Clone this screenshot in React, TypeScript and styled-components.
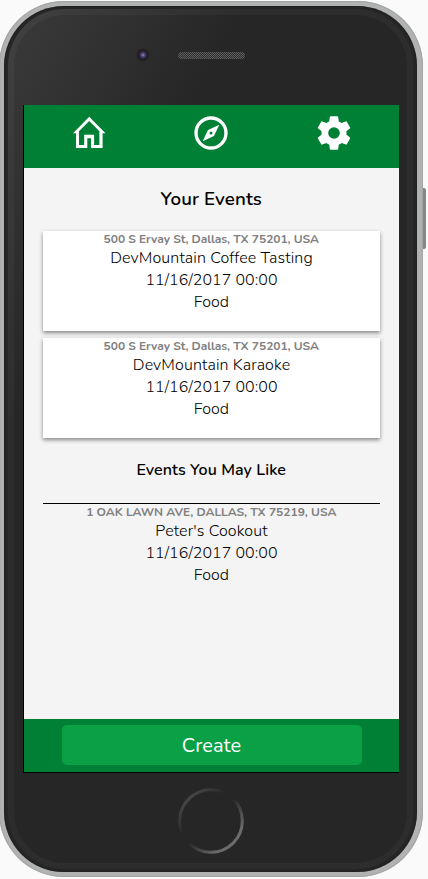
import React from "react";
import styled, { createGlobalStyle } from "styled-components";

const Global = createGlobalStyle`
  * { box-sizing: border-box; }
  body { margin: 0; background: #fafafa; overflow: hidden; font-family: "Nunito", "Lato", sans-serif; color: #000; }
  h2, h3, p { margin: 0; }
`;

const Stage = styled.div`
  position: relative;
  width: 428px;
  height: 879px;
  overflow: hidden;
`;

const Phone = styled.div`
  position: relative;
  width: 424px;
  height: 876px;
  margin-left: -1px;
  margin-top: 1px;
  padding: 5px 6px 5px 5px;
  border-radius: 65px;
  background: #b1b2b2;
  box-shadow: inset 0 0 1px 1px #a2a3a3;
`;

const Bezel = styled.div`
  height: 866px;
  padding: 3px 4px;
  border-radius: 60px;
  background: #262626;
  box-shadow: inset 0 0 2px #161616;
`;

const Face = styled.div`
  display: flex;
  flex-direction: column;
  align-items: center;
  height: 860px;
  border-radius: 57px;
  border: 6px solid rgba(255, 255, 255, 0.035);
  background: linear-gradient(119deg, #3a3a3a 0, #323232 90px, #262626 205px) border-box;
`;

const Earpiece = styled.div`
  display: flex;
  align-items: center;
  width: 100%;
  height: 90px;
  padding: 0 0 10px 122px;
  gap: 28px;
`;

const Camera = styled.div`
  width: 14px;
  height: 14px;
  border-radius: 50%;
  background: radial-gradient(circle, #7d7399 0 1px, #443362 2px 3px, #1f1f22 4px 5px, #2a2a2a 7px);
`;

const Speaker = styled.div`
  width: 67px;
  height: 7px;
  border-radius: 4px;
  background: repeating-conic-gradient(#303030 0 25%, #5c5c5c 0 50%) 0 0 / 2px 2px;
`;

const Screen = styled.main`
  display: flex;
  flex-direction: column;
  width: 376px;
  height: 668px;
  flex: none;
  border-left: 1px solid #000;
  border-bottom: 1px solid #000;
  background: #f4f4f4;
`;

const Nav = styled.nav`
  display: flex;
  justify-content: space-between;
  height: 63px;
  padding: 8px 45px 0;
  background: #008035;
  flex: none;
`;

const Icon = styled.svg`
  width: 40px;
  height: 40px;
  fill: #fff;
`;

const Content = styled.section`
  flex: 1;
  padding: 0 18.5px 0 19px;
  text-align: center;
`;

const Heading = styled.h2<{ $size: number; $height: number; $top: number; $bottom: number; $spacing: number }>`
  padding-top: ${(p) => p.$top}px;
  padding-bottom: ${(p) => p.$bottom}px;
  font-size: ${(p) => p.$size}px;
  font-weight: 600;
  line-height: ${(p) => p.$height}px;
  letter-spacing: ${(p) => p.$spacing}px;
`;

const Card = styled.article<{ $raised?: boolean }>`
  height: 100px;
  margin-bottom: 7px;
  background: ${(p) => (p.$raised ? "#fff" : "transparent")};
  box-shadow: ${(p) => (p.$raised ? "0 2px 4px rgba(0, 0, 0, 0.45)" : "none")};
`;

const Suggestions = styled.div`
  border-top: 1px solid #000;
`;

const Address = styled.p<{ $spacing: number }>`
  color: #808080;
  font-size: 12px;
  font-weight: 700;
  line-height: 16px;
  letter-spacing: ${(p) => p.$spacing}px;
`;

const Line = styled.p<{ $spacing?: number }>`
  padding-left: 0.5px;
  font-size: 16px;
  font-weight: 300;
  line-height: 22px;
  letter-spacing: ${(p) => p.$spacing ?? 0.05}px;
`;

const Footer = styled.footer`
  display: flex;
  height: 53px;
  padding: 6px 0 0 38px;
  background: #008035;
  flex: none;
`;

const CreateButton = styled.button`
  width: 300px;
  height: 40px;
  padding: 1px 0 0;
  border: 0;
  border-radius: 5px;
  background: #0aa146;
  color: #fff;
  font: 20px/39px "Nunito", "Lato", sans-serif;
`;

const HomeButton = styled.svg`
  width: 66px;
  height: 66px;
  margin: 15px 0 0 1px;
  flex: none;
`;

const SideButton = styled.div`
  position: absolute;
  left: 422px;
  top: 188px;
  width: 4px;
  height: 61px;
  border-radius: 0 2px 2px 0;
  background: #85868b;
`;

type Event = { address: string; title: string; addressSpacing: number; titleSpacing: number };

const mine: Event[] = [
  { address: "500 S Ervay St, Dallas, TX 75201, USA", title: "DevMountain Coffee Tasting", addressSpacing: -0.045, titleSpacing: 0.12 },
  { address: "500 S Ervay St, Dallas, TX 75201, USA", title: "DevMountain Karaoke", addressSpacing: -0.045, titleSpacing: 0.12 },
];
const suggested: Event = {
  address: "1 OAK LAWN AVE, DALLAS, TX 75219, USA", title: "Peter's Cookout", addressSpacing: -0.01, titleSpacing: 0.12,
};

function EventCard({ event, raised }: { event: Event; raised?: boolean }) {
  return (
    <Card $raised={raised}>
      <Address $spacing={event.addressSpacing}>{event.address}</Address>
      <Line $spacing={event.titleSpacing}>{event.title}</Line>
      <Line>11/16/2017 00:00</Line>
      <Line>Food</Line>
    </Card>
  );
}

export default function App() {
  return (
    <Stage>
      <Global />
      <SideButton />
      <Phone>
        <Bezel>
          <Face>
            <Earpiece><Camera /><Speaker /></Earpiece>
            <Screen>
              <Nav>
                <Icon viewBox="0 0 40 40"><path fillRule="evenodd" d="M20.2 3.7 36.5 20.2H33.6V35H22V25.3H18.3V35H7V20.2H4ZM20.2 8 10 18.2V32H15.2V21.8H25.1V32H30.4V18.2Z" /></Icon>
                <Icon viewBox="0 0 24 24"><path d="M7 17 10.2 10.2 17 7 13.8 13.8 7 17M12 11.1A.9.9 0 0 0 11.1 12 .9.9 0 0 0 12 12.9 .9.9 0 0 0 12.9 12 .9.9 0 0 0 12 11.1M12 2A10 10 0 0 1 22 12 10 10 0 0 1 12 22 10 10 0 0 1 2 12 10 10 0 0 1 12 2M12 4A8 8 0 0 0 4 12 8 8 0 0 0 12 20 8 8 0 0 0 20 12 8 8 0 0 0 12 4Z" /></Icon>
                <Icon viewBox="0 0 24 24"><path d="M12 15.5A3.5 3.5 0 0 1 8.5 12 3.5 3.5 0 0 1 12 8.5 3.5 3.5 0 0 1 15.5 12 3.5 3.5 0 0 1 12 15.5M19.43 12.97C19.47 12.65 19.5 12.33 19.5 12S19.47 11.34 19.43 11L21.54 9.37C21.73 9.22 21.78 8.95 21.66 8.73L19.66 5.27C19.54 5.05 19.27 4.96 19.05 5.05L16.56 6.05C16.04 5.66 15.5 5.32 14.87 5.07L14.5 2.42C14.46 2.18 14.25 2 14 2H10C9.75 2 9.54 2.18 9.5 2.42L9.13 5.07C8.5 5.32 7.96 5.66 7.44 6.05L4.95 5.05C4.73 4.96 4.46 5.05 4.34 5.27L2.34 8.73C2.21 8.95 2.27 9.22 2.46 9.37L4.57 11C4.53 11.34 4.5 11.67 4.5 12S4.53 12.65 4.57 12.97L2.46 14.63C2.27 14.78 2.21 15.05 2.34 15.27L4.34 18.73C4.46 18.95 4.73 19.03 4.95 18.95L7.44 17.94C7.96 18.34 8.5 18.68 9.13 18.93L9.5 21.58C9.54 21.82 9.75 22 10 22H14C14.25 22 14.46 21.82 14.5 21.58L14.87 18.93C15.5 18.67 16.04 18.34 16.56 17.94L19.05 18.95C19.27 19.03 19.54 18.95 19.66 18.73L21.66 15.27C21.78 15.05 21.73 14.78 21.54 14.63L19.43 12.97Z" /></Icon>
              </Nav>
              <Content>
                <Heading $size={18.8} $height={26} $top={18} $bottom={19} $spacing={0.1}>Your Events</Heading>
                {mine.map((event) => <EventCard key={event.title} event={event} raised />)}
                <Heading as="h3" $size={16} $height={22} $top={14} $bottom={22} $spacing={0.08}>Events You May Like</Heading>
                <Suggestions><EventCard event={suggested} /></Suggestions>
              </Content>
              <Footer><CreateButton>Create</CreateButton></Footer>
            </Screen>
            <HomeButton viewBox="0 0 66 66" fill="none" strokeWidth="3">
              <defs>
                <linearGradient id="ring" x1="0" y1="0" x2="1" y2="1">
                  <stop offset="0" stopColor="#585858" />
                  <stop offset="0.38" stopColor="#262626" />
                  <stop offset="0.5" stopColor="#262626" />
                  <stop offset="0.8" stopColor="#6b6b6b" />
                </linearGradient>
              </defs>
              <circle cx="33" cy="33" r="31.3" stroke="url(#ring)" />
            </HomeButton>
          </Face>
        </Bezel>
      </Phone>
    </Stage>
  );
}
